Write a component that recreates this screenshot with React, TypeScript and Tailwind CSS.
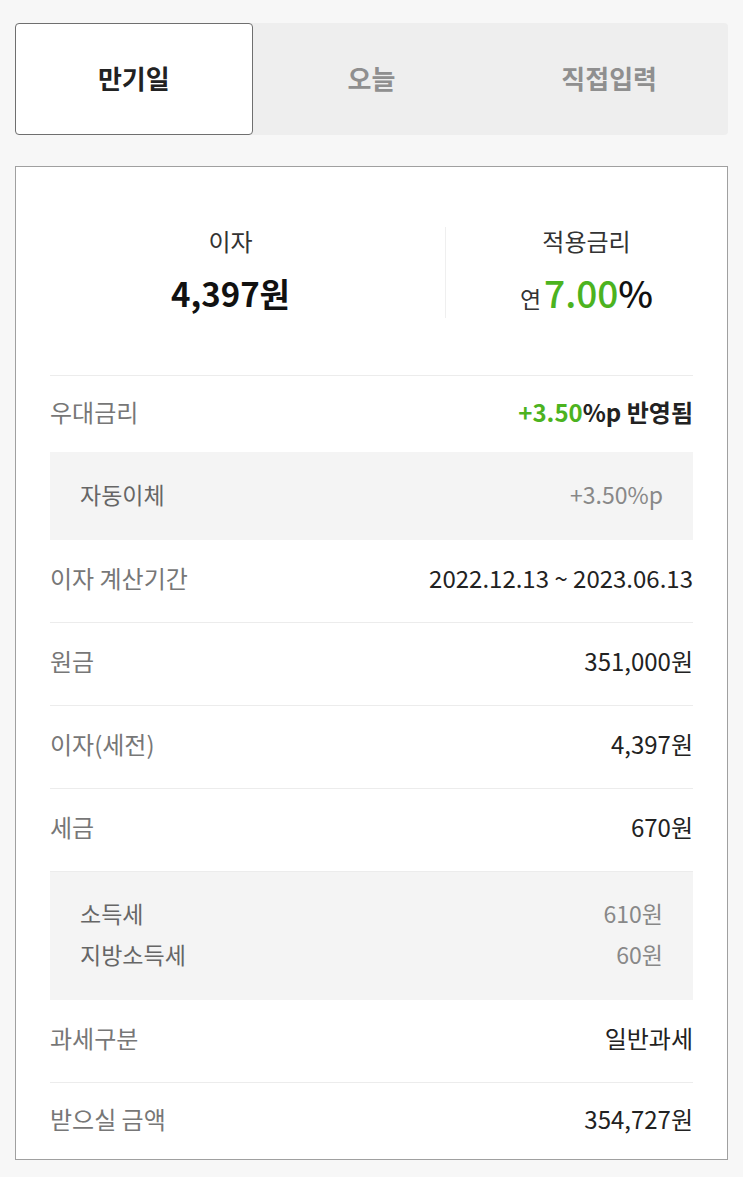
import React from "react";

const font = { fontFamily: '"Noto Sans CJK KR", "Noto Sans", sans-serif' };

const tabs = ["만기일", "오늘", "직접입력"];

function Row({ label, children, border = true }: { label: string; children: React.ReactNode; border?: boolean }) {
  return (
    <div className={`flex h-[83px] items-center justify-between pb-[7px] ${border ? "border-b border-[#ececec]" : ""}`}>
      <span className="text-[24px] text-[#777]">{label}</span>
      <span className="text-[24px] text-[#222]">{children}</span>
    </div>
  );
}

export default function App() {
  return (
    <div className="min-h-[1177px] bg-[#f7f7f7] px-[15px] pt-[23px]" style={font}>
      {/* Tabs */}
      <div className="grid h-[112px] grid-cols-3 rounded-[4px] bg-[#eeeeee]">
        {tabs.map((t, i) => (
          <button
            key={t}
            className={`flex items-center justify-center pb-[4px] text-[26px] font-bold ${
              i === 0 ? "rounded-[4px] border border-[#6f6f6f] bg-white text-[#222]" : "text-[#8f8f8f]"
            }`}
          >
            {t}
          </button>
        ))}
      </div>

      {/* Result card */}
      <div className="mt-[31px] border border-[#a0a0a0] bg-white">
        <div className="grid grid-cols-[430px_1fr] pt-[60px] pb-[57px]">
          <div className="flex h-[91px] flex-col items-center border-r border-[#efefef]">
            <span className="text-[24px] leading-[28px] text-[#333]">이자</span>
            <span className="mt-[18px] text-[33px] font-bold leading-[40px] text-[#111]">4,397원</span>
          </div>
          <div className="flex h-[91px] flex-col items-center">
            <span className="text-[24px] leading-[28px] text-[#333]">적용금리</span>
            <span className="mt-[16px] flex items-baseline leading-[42px]">
              <span className="mr-[3px] text-[23px] text-[#333]">연</span>
              <span className="text-[37px] font-medium text-[#4cb31f]">7.00</span>
              <span className="text-[37px] font-medium text-[#111]">%</span>
            </span>
          </div>
        </div>

        <div className="px-[34px]">
          <div className="flex h-[77px] items-center justify-between border-t border-[#ececec] pb-[5px]">
            <span className="text-[24px] text-[#777]">우대금리</span>
            <span className="text-[24px] font-semibold text-[#222]">
              <span className="text-[#4cb31f]">+3.50</span>%p 반영됨
            </span>
          </div>
          <div className="flex h-[88px] items-center justify-between bg-[#f4f4f4] px-[30px] pb-[4px]">
            <span className="text-[23px] text-[#666]">자동이체</span>
            <span className="text-[23px] text-[#888]">+3.50%p</span>
          </div>

          <Row label="이자 계산기간">2022.12.13 ~ 2023.06.13</Row>
          <Row label="원금">351,000원</Row>
          <Row label="이자(세전)">4,397원</Row>
          <Row label="세금">670원</Row>

          <div className="flex flex-col gap-[8px] bg-[#f4f4f4] px-[30px] pt-[25px] pb-[29px]">
            <div className="flex items-center justify-between leading-[33px]">
              <span className="text-[23px] text-[#666]">소득세</span>
              <span className="text-[23px] text-[#888]">610원</span>
            </div>
            <div className="flex items-center justify-between leading-[33px]">
              <span className="text-[23px] text-[#666]">지방소득세</span>
              <span className="text-[23px] text-[#888]">60원</span>
            </div>
          </div>

          <Row label="과세구분">일반과세</Row>
          <div className="flex h-[76px] items-center justify-between pb-[4px]">
            <span className="text-[24px] text-[#777]">받으실 금액</span>
            <span className="text-[24px] text-[#222]">354,727원</span>
          </div>
        </div>
      </div>
    </div>
  );
}
